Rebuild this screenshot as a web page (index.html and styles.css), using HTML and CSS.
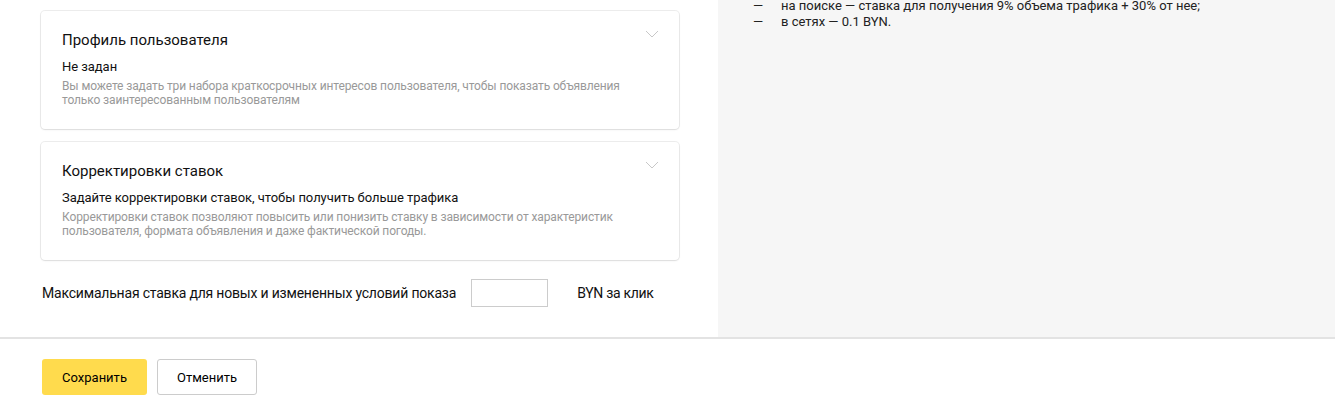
FILE: index.html
```html
<!DOCTYPE html>
<html lang="ru">
<head>
<meta charset="utf-8">
<link rel="stylesheet" href="styles.css">
</head>
<body>
<div class="page">
  <div class="main">
    <div class="form">
      <section class="card">
        <div class="card-head">
          <h3 class="card-title">Профиль пользователя</h3>
          <svg class="chevron" width="14" height="8" viewBox="0 0 14 8"><path d="M1 1l6 6 6-6" fill="none" stroke="#c8c8c8" stroke-width="1"/></svg>
        </div>
        <div class="card-value">Не задан</div>
        <div class="card-hint">Вы можете задать три набора краткосрочных интересов пользователя, чтобы показать объявления<br>только заинтересованным пользователям</div>
      </section>
      <section class="card">
        <div class="card-head">
          <h3 class="card-title">Корректировки ставок</h3>
          <svg class="chevron" width="14" height="8" viewBox="0 0 14 8"><path d="M1 1l6 6 6-6" fill="none" stroke="#c8c8c8" stroke-width="1"/></svg>
        </div>
        <div class="card-value">Задайте корректировки ставок, чтобы получить больше трафика</div>
        <div class="card-hint">Корректировки ставок позволяют повысить или понизить ставку в зависимости от характеристик<br>пользователя, формата объявления и даже фактической погоды.</div>
      </section>
      <div class="bid-row">
        <span class="bid-label">Максимальная ставка для новых и измененных условий показа</span>
        <input class="bid-input" type="text">
        <span class="bid-unit">BYN за клик</span>
      </div>
    </div>
    <aside class="side">
      <ul class="side-list">
        <li><span class="dash">—</span>на поиске — ставка для получения 9% объема трафика + 30% от нее;</li>
        <li><span class="dash">—</span>в сетях — 0.1 BYN.</li>
      </ul>
    </aside>
  </div>
  <footer class="footer">
    <button class="btn btn-primary">Сохранить</button>
    <button class="btn btn-default">Отменить</button>
  </footer>
</div>
</body>
</html>
```
FILE: styles.css
```css
* { box-sizing: border-box; }
html, body { margin: 0; padding: 0; background: #fff; }
body {
  font-family: "Roboto", "Liberation Sans", sans-serif;
  color: #000;
  width: 1335px;
  height: 410px;
  overflow: hidden;
}
.page { display: flex; flex-direction: column; }
.main { display: flex; height: 337px; }
.form {
  width: 718px;
  padding: 11px 39px 0 41px;
  display: flex;
  flex-direction: column;
  gap: 13px;
}
.card {
  border-radius: 4px;
  box-shadow: 0 0 0 1px rgba(0,0,0,0.07), 0 1px 2px rgba(0,0,0,0.08);
  padding: 19px 21px 22px 21px;
  height: 118px;
}
.card-head { display: flex; justify-content: space-between; align-items: flex-start; }
.card-title {
  margin: 0;
  font-size: 15px;
  font-weight: 400;
  line-height: 20px;
  color: #111;
}
.chevron { margin-top: 0; margin-right: -1px; }
.card-value { margin-top: 9px; font-size: 13px; line-height: 16px; letter-spacing: -0.05px; color: #111; }
.card-hint { margin-top: 4px; font-size: 12px; line-height: 14px; color: #999; letter-spacing: -0.12px; }
.bid-row {
  display: flex;
  align-items: center;
  margin-top: 6px;
  padding-left: 1px;
  font-size: 14px;
  color: #111;
}
.bid-label { letter-spacing: -0.2px; }
.bid-input {
  width: 77px;
  height: 28px;
  margin-left: 15px;
  border: 1px solid #ccc;
  border-radius: 0;
  padding: 0 6px;
  font: inherit;
}
.bid-unit { margin-left: 29px; letter-spacing: -0.3px; }
.side {
  flex: 1;
  background: #f6f6f6;
  padding: 0 0 0 35px;
}
.side-list {
  list-style: none;
  margin: -2px 0 0;
  padding: 0;
  font-size: 13px;
  line-height: 16px;
  color: #222;
}
.side-list li { display: flex; }
.dash { width: 28px; flex: none; }
.footer {
  border-top: 2px solid #e3e3e3;
  padding: 20px 42px;
  display: flex;
  gap: 10px;
}
.btn {
  height: 36px;
  border-radius: 3px;
  font-family: inherit;
  font-size: 13px;
  color: #000;
  padding: 0;
  cursor: pointer;
}
.btn-primary { width: 105px; background: #ffdb4d; border: none; }
.btn-default { width: 100px; background: #fff; border: 1px solid #ccc; }
```
